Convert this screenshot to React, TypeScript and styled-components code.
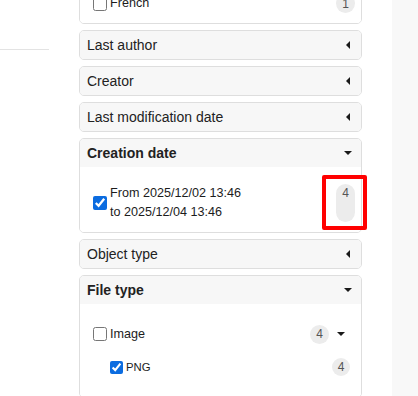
import React from "react";
import styled, { createGlobalStyle } from "styled-components";

const GlobalStyle = createGlobalStyle`
  html, body { margin: 0; padding: 0; background: #fff; overflow: hidden; }
  body { font-family: "Liberation Sans", Arial, sans-serif; color: #212529; }
  * { box-sizing: border-box; }
`;

const Page = styled.div`
  display: flex;
  width: 418px;
  height: 396px;
  overflow: hidden;
`;

const LeftPane = styled.div`
  width: 79px;
  flex: none;
  padding-top: 49px;
`;

const Rule = styled.div`
  width: 49px;
  height: 1px;
  background: #e3e3e3;
`;

const Facets = styled.div`
  width: 283px;
  flex: none;
  display: flex;
  flex-direction: column;
  gap: 6px;
  margin-top: -17px;
`;

const Gutter = styled.div`
  width: 30px;
  flex: none;
`;

const SidePane = styled.div`
  flex: 1;
  background: #f8f8f8;
`;

const Card = styled.section`
  border: 1px solid #dedede;
  border-radius: 5px;
  background: #fff;
`;

const Header = styled.div<{ $open?: boolean }>`
  display: flex;
  align-items: center;
  justify-content: space-between;
  height: 28px;
  padding: 0 9px 0 7px;
  background: #f7f7f7;
  border-radius: ${(p) => (p.$open ? "4px 4px 0 0" : "4px")};
  font-size: 14px;
  font-weight: ${(p) => (p.$open ? 700 : 400)};
  color: #222;
`;

const CaretBox = styled.span`
  width: 8px;
  height: 9px;
  display: flex;
  align-items: center;
  justify-content: center;
  flex: none;
`;

const CaretLeft = styled.span`
  width: 0;
  height: 0;
  border-top: 4px solid transparent;
  border-bottom: 4px solid transparent;
  border-right: 4px solid #1a1a1a;
`;

const CaretDown = styled.span`
  width: 0;
  height: 0;
  border-left: 4px solid transparent;
  border-right: 4px solid transparent;
  border-top: 4px solid #1a1a1a;
`;

const Body = styled.div<{ $pt: number; $pb: number }>`
  display: flex;
  flex-direction: column;
  gap: 14px;
  padding: ${(p) => p.$pt}px 0 ${(p) => p.$pb}px 9px;
  border-radius: 0 0 4px 4px;
  background: #fff;
`;

const Row = styled.div<{ $indent?: number; $pr?: number }>`
  position: relative;
  display: flex;
  align-items: center;
  padding-left: ${(p) => p.$indent ?? 0}px;
  padding-right: ${(p) => p.$pr ?? 6}px;
  min-height: 19px;
`;

const Check = styled.input.attrs({ type: "checkbox" })<{ $size?: number }>`
  width: ${(p) => p.$size ?? 14}px;
  height: ${(p) => p.$size ?? 14}px;
  margin: 0 3px 0 4px;
  flex: none;
  accent-color: #0b6ce0;
`;

const Label = styled.span<{ $small?: boolean }>`
  flex: 1;
  font-size: ${(p) => (p.$small ? "11.34px" : "12.6px")};
  line-height: ${(p) => (p.$small ? "17px" : "18.9px")};
  color: #1c1c1c;
`;

const Badge = styled.span<{ $size?: number; $tall?: boolean }>`
  flex: none;
  min-width: ${(p) => p.$size ?? 19}px;
  height: ${(p) => (p.$tall ? "auto" : `${p.$size ?? 19}px`)};
  align-self: ${(p) => (p.$tall ? "stretch" : "center")};
  display: flex;
  align-items: ${(p) => (p.$tall ? "flex-start" : "center")};
  justify-content: center;
  padding-top: ${(p) => (p.$tall ? "3px" : "0")};
  border-radius: 10px;
  background: #ececec;
  color: #555;
  font-size: 12px;
  line-height: 12px;
`;

const RowCaret = styled.span`
  width: 16px;
  display: flex;
  justify-content: center;
  margin-left: 4px;
  flex: none;
`;

const Highlight = styled.div`
  position: absolute;
  z-index: 2;
  top: -9px;
  right: -6px;
  width: 45px;
  height: 55px;
  border: 4px solid #ff0000;
  border-radius: 2px;
  pointer-events: none;
`;

const Collapsed = ({ title }: { title: string }) => (
  <Card>
    <Header>
      <span>{title}</span>
      <CaretBox>
        <CaretLeft />
      </CaretBox>
    </Header>
  </Card>
);

export default function App() {
  return (
    <>
      <GlobalStyle />
      <Page>
        <LeftPane>
          <Rule />
        </LeftPane>
        <Facets>
          <Card>
            <Body $pt={10} $pb={10}>
              <Row>
                <Check />
                <Label>French</Label>
                <Badge>1</Badge>
              </Row>
            </Body>
          </Card>
          <Collapsed title="Last author" />
          <Collapsed title="Creator" />
          <Collapsed title="Last modification date" />
          <Card>
            <Header $open>
              <span>Creation date</span>
              <CaretBox>
                <CaretDown />
              </CaretBox>
            </Header>
            <Body $pt={17} $pb={10}>
              <Row>
                <Check defaultChecked />
                <Label>
                  From 2025/12/02 13:46
                  <br />
                  to 2025/12/04 13:46
                </Label>
                <Badge $tall>4</Badge>
                <Highlight />
              </Row>
            </Body>
          </Card>
          <Collapsed title="Object type" />
          <Card>
            <Header $open>
              <span>File type</span>
              <CaretBox>
                <CaretDown />
              </CaretBox>
            </Header>
            <Body $pt={21} $pb={20}>
              <Row $pr={12}>
                <Check />
                <Label>Image</Label>
                <Badge>4</Badge>
                <RowCaret>
                  <CaretDown />
                </RowCaret>
              </Row>
              <Row $indent={17} $pr={11}>
                <Check defaultChecked $size={13} />
                <Label $small>PNG</Label>
                <Badge $size={18}>4</Badge>
              </Row>
            </Body>
          </Card>
        </Facets>
        <Gutter />
        <SidePane />
      </Page>
    </>
  );
}
